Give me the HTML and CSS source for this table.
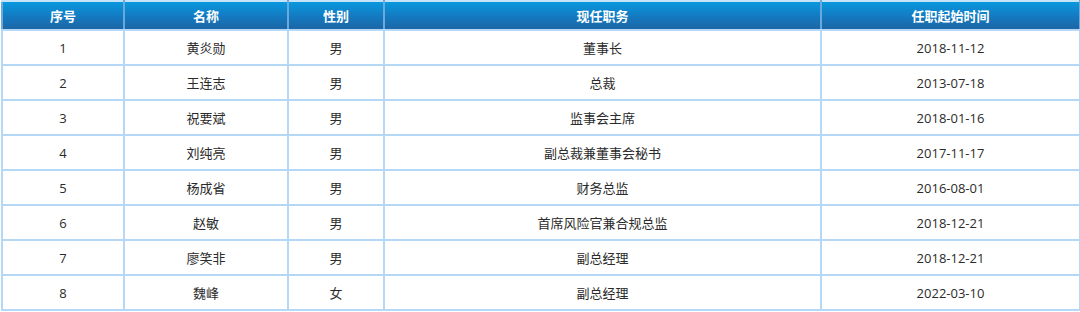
FILE: index.html
```html
<!DOCTYPE html>
<html lang="zh-CN">
<head>
<meta charset="utf-8">
<title>高管列表</title>
<link rel="stylesheet" href="styles.css">
</head>
<body>
<div class="wrap">
<table class="staff">
  <colgroup>
    <col class="c1"><col class="c2"><col class="c3"><col class="c4"><col class="c5">
  </colgroup>
  <thead>
    <tr><th>序号</th><th>名称</th><th>性别</th><th>现任职务</th><th>任职起始时间</th></tr>
  </thead>
  <tbody>
    <tr><td>1</td><td>黄炎勋</td><td>男</td><td>董事长</td><td>2018-11-12</td></tr>
    <tr><td>2</td><td>王连志</td><td>男</td><td>总裁</td><td>2013-07-18</td></tr>
    <tr><td>3</td><td>祝要斌</td><td>男</td><td>监事会主席</td><td>2018-01-16</td></tr>
    <tr><td>4</td><td>刘纯亮</td><td>男</td><td>副总裁兼董事会秘书</td><td>2017-11-17</td></tr>
    <tr><td>5</td><td>杨成省</td><td>男</td><td>财务总监</td><td>2016-08-01</td></tr>
    <tr><td>6</td><td>赵敏</td><td>男</td><td>首席风险官兼合规总监</td><td>2018-12-21</td></tr>
    <tr><td>7</td><td>廖笑非</td><td>男</td><td>副总经理</td><td>2018-12-21</td></tr>
    <tr><td>8</td><td>魏峰</td><td>女</td><td>副总经理</td><td>2022-03-10</td></tr>
  </tbody>
</table>
</div>
</body>
</html>
```
FILE: styles.css
```css
html, body {
  margin: 0;
  padding: 0;
  background: #ffffff;
}
.wrap {
  padding: 0 1px 0 1px;
}
.staff {
  width: 1078px;
  border-collapse: collapse;
  table-layout: fixed;
  font-family: "Open Sans", "Noto Sans CJK SC", sans-serif;
  font-size: 13px;
  color: #2b2b2b;
}
.c1 { width: 122px; }
.c2 { width: 164px; }
.c3 { width: 96px; }
.c4 { width: 437px; }
.c5 { width: 259px; }
.staff th,
.staff td {
  border: 2px solid #b4d8f6;
  text-align: center;
  padding: 0;
}
.staff th {
  height: 27px;
  color: #ffffff;
  font-weight: bold;
  font-family: "Noto Sans CJK SC", sans-serif;
  font-size: 13px;
  background: linear-gradient(to bottom, #0898de 0%, #1479c0 55%, #1c67a6 100%);
  border-left-color: #6aa9dc;
  border-right-color: #6aa9dc;
  border-top-color: #c4e2f8;
}
.staff td {
  height: 33px;
}
```
